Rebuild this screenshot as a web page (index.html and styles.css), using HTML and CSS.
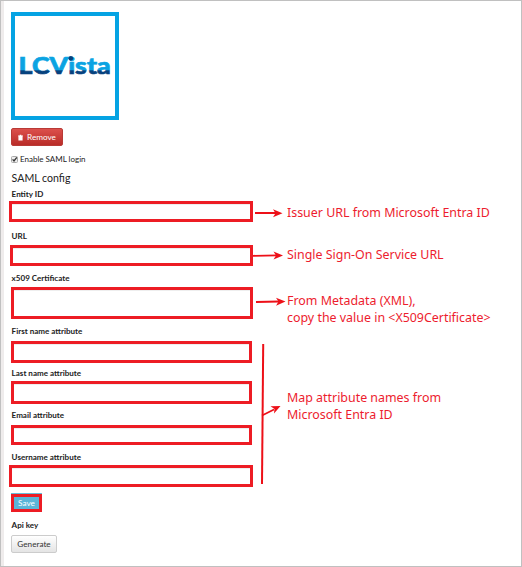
FILE: index.html
```html
<!DOCTYPE html>
<html lang="en">
<head>
<meta charset="utf-8">
<title>SAML config</title>
<link rel="stylesheet" href="styles.css">
</head>
<body>
<main class="page">
  <form class="settings">
    <div class="logo">
      <svg class="logo-mark" viewBox="0 0 100 100">
        <defs>
          <linearGradient id="wave" gradientUnits="userSpaceOnUse" x1="0" y1="0" x2="0" y2="100">
            <stop offset=".538" stop-color="#0ba3e2"/><stop offset=".548" stop-color="#07427e"/>
          </linearGradient>
        </defs>
        <text class="logo-text" x="3.6" y="58" textLength="92" lengthAdjust="spacingAndGlyphs" fill="url(#wave)" stroke="url(#wave)">LCVista</text>
        <circle cx="55.8" cy="42.3" r="2.4" fill="#07427e"/>
      </svg>
    </div>
    <button type="button" class="btn btn-danger">
      <svg class="trash" viewBox="0 0 6 7"><path d="M0 1h2V.3h2V1h2v1H0zM.5 2h5V7h-5z" fill="#fff"/></svg>Remove
    </button>
    <label class="check">
      <svg class="checkbox" viewBox="0 0 7 7"><rect x=".5" y=".5" width="6" height="6" rx="1" fill="#eee" stroke="#aaa"/><path d="M1.6 3.4 3 5 5.8 1.3" fill="none" stroke="#333" stroke-width="1.3"/></svg>
      <span class="check-text">Enable SAML login</span>
    </label>
    <h1 class="heading">SAML config</h1>
    <label class="field-label label-entity">Entity ID</label>
    <div class="field field-entity"></div>
    <label class="field-label label-url">URL</label>
    <div class="field field-url"></div>
    <label class="field-label label-cert">x509 Certificate</label>
    <div class="field field-cert"></div>
    <label class="field-label label-first">First name attribute</label>
    <div class="field field-first"></div>
    <label class="field-label label-last">Last name attribute</label>
    <div class="field field-last"></div>
    <label class="field-label label-email">Email attribute</label>
    <div class="field field-email"></div>
    <label class="field-label label-user">Username attribute</label>
    <div class="field field-user"></div>
    <div class="save-wrap"><button type="button" class="save">Save</button></div>
    <label class="field-label label-api">Api key</label>
    <button type="button" class="btn btn-default">Generate</button>
  </form>
  <aside class="notes">
    <p class="note note-issuer">Issuer URL from Microsoft Entra ID</p>
    <p class="note note-signon">Single Sign-On Service URL</p>
    <p class="note note-meta">From Metadata (XML),<br>copy the value in &lt;X509Certificate&gt;</p>
    <p class="note note-map">Map attribute names from<br>Microsoft Entra ID</p>
  </aside>
  <svg class="arrows" viewBox="0 0 522 567">
    <g fill="none" stroke="#ed1018" stroke-width="1.8">
      <path d="M255 213H277M253 255.8 277 255.3M256 302 279 301.5M262 415.5 274 409.5"/>
      <path d="M263.2 344 262 484" stroke-width="2"/>
    </g>
    <g fill="#ed1018">
      <path d="M282.5 213.3 273 209.3 275.5 213.2 273 217.2z"/>
      <path d="M283 255.4 273.5 251.5 276 255.4 273.5 259.6z"/>
      <path d="M285.5 301.5 276 297.7 278.5 301.5 276 305.7z"/>
      <path d="M280.5 406 270.5 406.3 274.5 409 274 413.5z"/>
    </g>
  </svg>
</main>
</body>
</html>
```
FILE: styles.css
```css
* { box-sizing: border-box; }
body { margin: 0; background: #fff; }
.page {
  position: relative;
  display: flex;
  width: 522px;
  height: 567px;
  overflow: hidden;
  border: 1px solid #c0c0c0;
  font-family: Lato, sans-serif;
  color: #222;
}
.settings {
  display: flex;
  flex-direction: column;
  align-items: flex-start;
  width: 286px;
  padding: 11px 0 0 7px;
  border-left: 3px solid #efecec;
}
.logo {
  width: 108px;
  height: 108px;
  border: 4px solid #05a3e3;
  flex: none;
}
.logo-mark { display: block; width: 100px; height: 100px; }
.logo-text { font: 900 23px Lato, sans-serif; stroke-width: .7px; }
.btn {
  display: flex;
  align-items: center;
  justify-content: center;
  height: 18px;
  padding: 0;
  border-radius: 2px;
  font: 8.2px/10px Lato, sans-serif;
  flex: none;
}
.btn-danger {
  width: 52px;
  margin-top: 8px;
  border: 1px solid #b93a36;
  background: linear-gradient(#dc504c, #b92c28);
  color: #fff;
}
.trash { width: 5px; height: 7px; margin-right: 4px; }
.check {
  display: flex;
  align-items: center;
  height: 10px;
  margin-top: 8px;
  font-size: 8px;
  line-height: 10px;
}
.checkbox { width: 7px; height: 7px; margin-right: 2px; }
.heading {
  height: 14px;
  margin: 7px 0 0;
  padding-left: .6px;
  font-size: 10.6px;
  line-height: 14px;
  font-weight: 400;
}
.field-label {
  height: 10px;
  padding-left: .6px;
  font-size: 8.05px;
  line-height: 10px;
  font-weight: 700;
  white-space: nowrap;
}
.field {
  width: 242px;
  border: 3px solid #ed1c24;
  background: #fff;
  box-shadow: inset 0 1px #eee;
  flex: none;
}
.label-entity { margin-top: 4px; }
.field-entity { width: 244px; height: 21px; margin: 2px 0 0 -2px; }
.label-url { margin-top: 9px; }
.field-url { width: 243px; height: 21px; margin: 4px 0 0 -1px; }
.label-cert { margin-top: 7px; }
.field-cert { height: 32px; margin-top: 4px; }
.label-first { margin-top: 7px; }
.field-first { width: 241px; height: 22px; margin-top: 5px; }
.label-last { margin-top: 5px; }
.field-last { width: 241px; height: 23px; margin-top: 3px; }
.label-email { margin-top: 6px; }
.field-email { width: 241px; height: 20px; margin-top: 5px; }
.label-user { margin-top: 7px; }
.field-user { width: 244px; height: 22px; margin: 3px 0 0 -2px; }
.save-wrap { margin-top: 6px; padding-top: 1px; background: linear-gradient(#69bcd8 0 1px, transparent 1px); }
.save {
  display: block;
  width: 31px;
  height: 18px;
  padding: 0;
  border: 3px solid #ed1c24;
  background: #5bb5d8;
  color: #fff;
  font: 8.2px/11px Lato, sans-serif;
}
.label-api { margin-top: 8px; }
.btn-default {
  width: 46px;
  margin-top: 5px;
  border: 1px solid #ccc;
  background: linear-gradient(#fff, #e4e4e4);
  color: #333;
}
.notes { width: 234px; color: #ed1c2e; }
.note {
  width: 234px;
  margin: 0;
  font: 13px/17px "Noto Sans", sans-serif;
  white-space: nowrap;
  transform: scaleX(.955);
  transform-origin: 0 0;
}
.note-issuer { margin-top: 203px; }
.note-signon { margin-top: 25px; }
.note-meta { margin-top: 29px; }
.note-map { margin-top: 63px; }
.arrows {
  position: absolute;
  left: -1px;
  top: -1px;
  width: 522px;
  height: 567px;
}
```
